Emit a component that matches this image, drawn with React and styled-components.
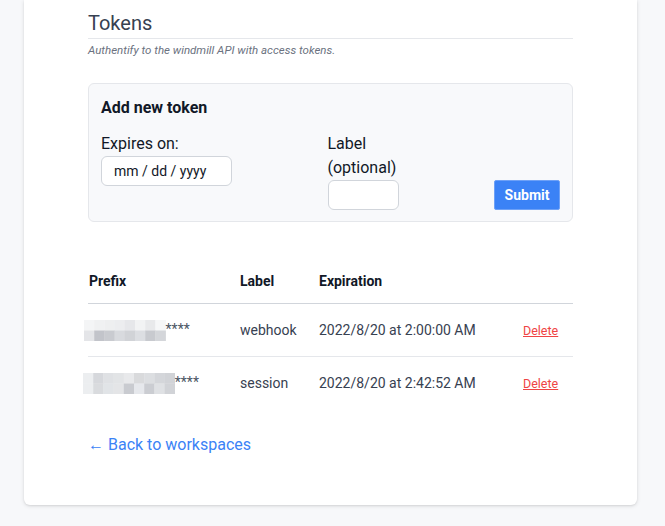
import React from 'react';
import styled, { createGlobalStyle } from 'styled-components';

const GlobalStyle = createGlobalStyle`
  html, body {
    margin: 0;
    padding: 0;
    background: #f7f8fa;
    font-family: Roboto, "Noto Sans", "Liberation Sans", sans-serif;
  }
`;

const Page = styled.div`
  padding: 0 28px 21px 24px;
`;

const Card = styled.div`
  background: #fff;
  border-radius: 0 0 6px 6px;
  box-shadow: 0 1px 4px rgba(0, 0, 0, 0.12), 0 1px 2px rgba(0, 0, 0, 0.06);
  padding: 0 64px 48px 64px;
`;

const Title = styled.h2`
  margin: 0;
  padding-top: 9px;
  font-size: 20px;
  line-height: 29px;
  font-weight: 400;
  color: #374151;
  border-bottom: 1px solid #e5e7eb;
`;

const Subtitle = styled.p`
  margin: 3px 0 0;
  font-size: 11.5px;
  line-height: 16px;
  font-style: italic;
  color: #6b7280;
`;

const FormBox = styled.div`
  margin-top: 25px;
  background: #f8f9fb;
  border: 1px solid #e5e7eb;
  border-radius: 6px;
  padding: 12px 12px 11px 12px;
`;

const FormTitle = styled.h3`
  margin: 0;
  font-size: 16px;
  line-height: 24px;
  font-weight: 700;
  color: #111827;
`;

const FormRow = styled.div`
  margin-top: 12px;
  display: flex;
  justify-content: space-between;
  align-items: flex-start;
`;

const Field = styled.label`
  display: flex;
  flex-direction: column;
  width: ${p => p.$width}px;
  font-size: 16px;
  line-height: 24px;
  color: #111827;
`;

const Input = styled.input`
  box-sizing: border-box;
  width: 100%;
  height: 30px;
  margin: 0;
  padding: 0 12px;
  border: 1px solid #d1d5db;
  border-radius: 6px;
  background: #fff;
  font-family: inherit;
  font-size: 14px;
  color: #111827;
  outline: none;
`;

const SubmitButton = styled.button`
  align-self: flex-end;
  box-sizing: border-box;
  width: 66px;
  height: 30px;
  border: 1px solid #6ea1f7;
  border-radius: 2px;
  background: #3b82f6;
  color: #fff;
  font-family: inherit;
  font-size: 14px;
  font-weight: 700;
  cursor: pointer;
`;

const Table = styled.div`
  margin-top: 36px;
`;

const Row = styled.div`
  display: grid;
  grid-template-columns: 152px 79px 1fr 50px;
  align-items: center;
  height: ${p => (p.$head ? 45 : 52)}px;
  border-bottom: ${p => (p.$last ? 'none' : `1px solid ${p.$head ? '#d1d5db' : '#e5e7eb'}`)};
  font-size: 14px;
  color: ${p => (p.$head ? '#111827' : '#374151')};
  font-weight: ${p => (p.$head ? 700 : 400)};
`;

const Cell = styled.div`
  display: flex;
  align-items: center;
  padding-left: ${p => p.$pad || 0}px;
  white-space: nowrap;
`;

const Stars = styled.span`
  font-size: 14px;
  color: #4b5563;
  margin-top: -3px;
`;

const DeleteLink = styled.a`
  font-size: 12.5px;
  color: #ef4444;
  text-decoration: underline;
  cursor: pointer;
`;

const BackLink = styled.a`
  display: inline-block;
  margin-top: 24px;
  font-size: 16px;
  line-height: 24px;
  color: #3b82f6;
  text-decoration: none;
`;

function Mosaic({ cells, cols, shift }) {
  const w = 10.2;
  const h = 10.5;
  return (
    <svg
      width={cols * w}
      height={2 * h}
      style={{ marginLeft: shift, display: 'block' }}
      viewBox={`0 0 ${cols * w} ${2 * h}`}
    >
      {cells.map((c, i) => (
        <rect
          key={i}
          x={(i % cols) * w}
          y={Math.floor(i / cols) * h}
          width={w + 0.3}
          height={h + 0.3}
          fill={c}
        />
      ))}
    </svg>
  );
}

const tokens = [
  {
    cols: 8,
    shift: -4,
    cells: [
      '#f4f5f6', '#f0f1f2', '#eeeff0', '#ecedef', '#e6e7ea', '#f2f3f4', '#e8e9eb', '#f6f7f8',
      '#e4e5e8', '#c2c4ca', '#c9cbd0', '#d8dade', '#d1d3d7', '#dcdee2', '#c8cacf', '#d4d6da',
    ],
    label: 'webhook',
    expiration: '2022/8/20 at 2:00:00 AM',
  },
  {
    cols: 9,
    shift: -5,
    cells: [
      '#eceef0', '#d6d8dc', '#dfe1e4', '#e2e4e6', '#e8e9eb', '#d9dadc', '#dcdee1', '#d4d6da', '#d1d3d7',
      '#eceef0', '#d9dbde', '#e1e4e7', '#e4e5e7', '#c9cbd0', '#e6e8ec', '#cbcdd2', '#dfe1e4', '#d1d3d7',
    ],
    label: 'session',
    expiration: '2022/8/20 at 2:42:52 AM',
  },
];

export default function App() {
  return (
    <>
      <GlobalStyle />
      <Page>
        <Card>
          <Title>Tokens</Title>
          <Subtitle>Authentify to the windmill API with access tokens.</Subtitle>

          <FormBox>
            <FormTitle>Add new token</FormTitle>
            <FormRow>
              <Field $width={131}>
                Expires on:
                <Input readOnly defaultValue="mm / dd / yyyy" />
              </Field>
              <Field $width={71}>
                Label (optional)
                <Input />
              </Field>
              <SubmitButton>Submit</SubmitButton>
            </FormRow>
          </FormBox>

          <Table>
            <Row $head>
              <Cell $pad={1}>Prefix</Cell>
              <Cell>Label</Cell>
              <Cell>Expiration</Cell>
              <Cell />
            </Row>
            {tokens.map((t, i) => (
              <Row key={i} $last={i === tokens.length - 1}>
                <Cell>
                  <Mosaic cells={t.cells} cols={t.cols} shift={t.shift} />
                  <Stars>****</Stars>
                </Cell>
                <Cell>{t.label}</Cell>
                <Cell>{t.expiration}</Cell>
                <Cell>
                  <DeleteLink>Delete</DeleteLink>
                </Cell>
              </Row>
            ))}
          </Table>

          <BackLink href="#">← Back to workspaces</BackLink>
        </Card>
      </Page>
    </>
  );
}
